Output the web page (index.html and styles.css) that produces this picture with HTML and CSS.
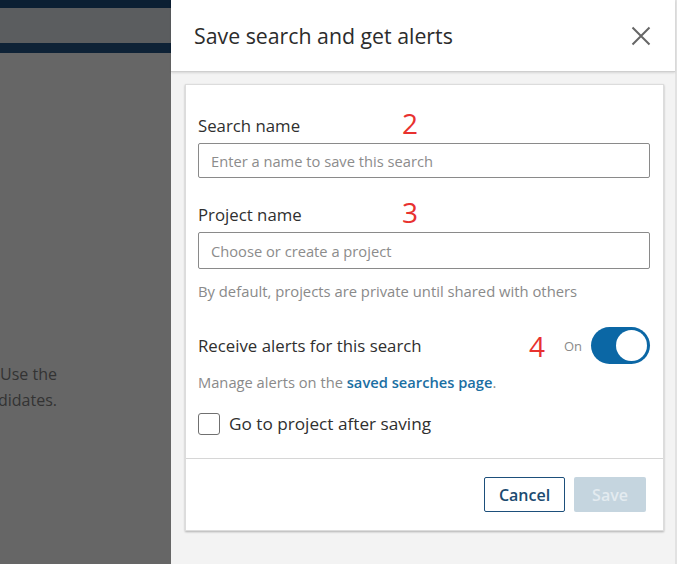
FILE: index.html
```html
<!DOCTYPE html>
<html lang="en">
<head>
<meta charset="utf-8">
<title>Save search and get alerts</title>
<link rel="stylesheet" href="styles.css">
</head>
<body>
<div class="backdrop">
  <div class="bd-top"></div>
  <div class="bd-band"></div>
  <div class="bd-nav"></div>
  <div class="bd-text">
    <p>Use the</p>
    <p class="cut">didates.</p>
  </div>
</div>
<aside class="panel">
  <header class="panel-head">
    <h1 class="panel-title">Save search and get alerts</h1>
    <button class="close" aria-label="Close">
      <svg width="20" height="20" viewBox="0 0 20 20"><path d="M1.5 1.5 L18.5 18.5 M18.5 1.5 L1.5 18.5" stroke="#666" stroke-width="2" fill="none"/></svg>
    </button>
  </header>
  <div class="panel-body">
    <section class="card">
      <div class="card-main">
        <div class="field">
          <label class="label">Search name<span class="mark mark-2">2</span></label>
          <div class="input">Enter a name to save this search</div>
        </div>
        <div class="field">
          <label class="label">Project name<span class="mark mark-3">3</span></label>
          <div class="input input-tall">Choose or create a project</div>
          <p class="hint">By default, projects are private until shared with others</p>
        </div>
        <div class="alert-row">
          <span class="label-text">Receive alerts for this search</span>
          <div class="toggle-group">
            <span class="mark-inline">4</span>
            <span class="on">On</span>
            <span class="toggle"><span class="knob"></span></span>
          </div>
        </div>
        <p class="manage">Manage alerts on the <a class="link">saved searches page</a>.</p>
        <div class="check-row">
          <span class="checkbox"></span>
          <span class="check-text">Go to project after saving</span>
        </div>
      </div>
      <footer class="card-foot">
        <button class="btn btn-cancel">Cancel</button>
        <button class="btn btn-save">Save</button>
      </footer>
    </section>
  </div>
</aside>
</body>
</html>
```
FILE: styles.css
```css
* { box-sizing: border-box; }
html, body { margin: 0; padding: 0; }
body {
  width: 677px;
  height: 564px;
  overflow: hidden;
  display: flex;
  font-family: "Open Sans", "Noto Sans", sans-serif;
  color: #2f2f2f;
}
.backdrop {
  width: 171px;
  flex: none;
  background: #666666;
  display: flex;
  flex-direction: column;
  overflow: hidden;
}
.bd-top { height: 8px; background: #0b1f33; }
.bd-band { height: 35px; background: #5b5d5f; }
.bd-nav { height: 10px; background: #0e2236; }
.bd-text {
  margin-top: 308px;
  font-size: 16px;
  line-height: 26px;
  color: #333;
}
.bd-text p { margin: 0; }
.bd-text .cut { margin-left: -2px; }

.panel {
  flex: 1;
  background: #f3f3f3;
  display: flex;
  flex-direction: column;
  border-right: 2px solid #e2e2e2;
}
.panel-head {
  height: 72px;
  flex: none;
  background: #fff;
  border-bottom: 1px solid #cfcfcf;
  box-shadow: 0 1px 2px rgba(0,0,0,0.12);
  display: flex;
  align-items: center;
  justify-content: space-between;
  padding: 0 24px 0 23px;
}
.panel-title {
  margin: 0;
  font-weight: 400;
  font-size: 21.3px;
  color: #2c2c2c;
}
.close {
  border: 0;
  background: none;
  padding: 0;
  width: 20px;
  height: 20px;
  display: flex;
}
.panel-body {
  padding: 12px 11px 0 14px;
}
.card {
  background: #fff;
  border: 1px solid #dcdcdc;
  box-shadow: 0 1px 2px rgba(0,0,0,0.28);
}
.card-main {
  padding: 30px 13px 23px 12px;
}
.field { margin-bottom: 26px; }
.label {
  display: block;
  position: relative;
  font-size: 16.8px;
  line-height: 22px;
  margin-bottom: 6px;
  color: #2f2f2f;
}
.mark {
  position: absolute;
  left: 204px;
  top: -7px;
  font-size: 28px;
  line-height: 30px;
  color: #e8312f;
}
.input {
  height: 35px;
  border: 1px solid #8a8a8a;
  border-radius: 2px;
  padding: 0 12px;
  display: flex;
  align-items: center;
  font-size: 14.7px;
  color: #8c8c8c;
}
.input-tall { height: 37px; }
.hint {
  margin: 12px 0 0;
  font-size: 14.8px;
  line-height: 20px;
  color: #8a8a8a;
}
.field:nth-child(2) { margin-bottom: 26px; }
.alert-row {
  display: flex;
  align-items: center;
  justify-content: space-between;
}
.label-text { font-size: 16.8px; color: #2f2f2f; }
.toggle-group { display: flex; align-items: center; }
.mark-inline {
  font-size: 28px;
  line-height: 30px;
  color: #e8312f;
  margin-right: 19px;
}
.on {
  font-size: 13px;
  color: #8a8a8a;
  margin-right: 9px;
}
.toggle {
  width: 59px;
  height: 37px;
  border-radius: 19px;
  background: #0b67a5;
  display: flex;
  align-items: center;
  justify-content: flex-end;
  padding-right: 3px;
}
.knob {
  width: 31px;
  height: 31px;
  border-radius: 50%;
  background: #fff;
}
.manage {
  margin: 8px 0 0;
  font-size: 14.7px;
  line-height: 20px;
  color: #8a8a8a;
}
.link { color: #1b6fa3; font-weight: 600; }
.check-row {
  display: flex;
  align-items: center;
  margin-top: 20px;
  gap: 9px;
}
.checkbox {
  width: 22px;
  height: 22px;
  border: 1.5px solid #707070;
  border-radius: 3px;
}
.check-text { font-size: 17.2px; color: #2f2f2f; }
.card-foot {
  border-top: 1px solid #d6d6d6;
  display: flex;
  justify-content: flex-end;
  gap: 9px;
  padding: 18px 17px 18px;
}
.btn {
  height: 35px;
  border-radius: 2px;
  font-family: inherit;
  font-size: 16px;
  font-weight: 600;
  padding: 0;
}
.btn-cancel {
  width: 81px;
  background: #fff;
  border: 1.5px solid #1d4f7b;
  color: #1b4a70;
}
.btn-save {
  width: 72px;
  background: #c5d5df;
  border: 0;
  color: #e3ebf0;
}
```
